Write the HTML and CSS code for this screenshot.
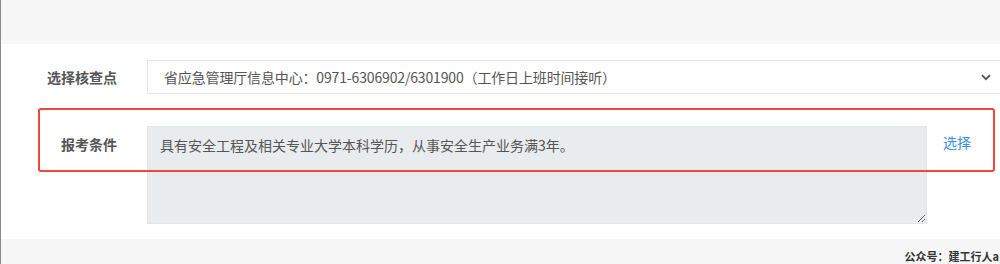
FILE: index.html
```html
<!DOCTYPE html>
<html lang="zh-CN">
<head>
<meta charset="utf-8">
<title>报考条件</title>
<link rel="stylesheet" href="styles.css">
</head>
<body>
<div class="page">
  <div class="top-band"></div>
  <div class="form">
    <div class="row row-select">
      <div class="label">选择核查点</div>
      <div class="select">
        <span class="select-text">省应急管理厅信息中心：0971-6306902/6301900（工作日上班时间接听）</span>
        <svg class="chevron" width="10" height="7" viewBox="0 0 10 7"><path d="M1 1.2 L5 5.2 L9 1.2" fill="none" stroke="#555" stroke-width="1.8"/></svg>
      </div>
    </div>
    <div class="row row-cond">
      <div class="label label-top">报考条件</div>
      <textarea class="area" readonly>具有安全工程及相关专业大学本科学历，从事安全生产业务满3年。</textarea>
      <a class="pick">选择</a>
    </div>
  </div>
  <div class="highlight"></div>
  <div class="footer"><span class="footer-text">公众号：建工行人a</span></div>
</div>
</body>
</html>
```
FILE: styles.css
```css
html, body {
  margin: 0;
  padding: 0;
  background: #fff;
}
body {
  font-family: "Noto Sans CJK SC", "Noto Sans", sans-serif;
  overflow: hidden;
}
.page {
  position: relative;
  width: 999px;
  height: 264px;
  border-left: 1px solid #8a8a8a;
  overflow: hidden;
  display: flex;
  flex-direction: column;
}
.top-band {
  height: 44px;
  background: #f7f7f7;
  flex: none;
}
.form {
  padding-top: 16px;
  flex: none;
}
.row {
  display: grid;
  column-gap: 30px;
}
.row-select {
  grid-template-columns: 116px 858px;
  align-items: center;
  height: 34px;
}
.row-cond {
  margin-top: 32px;
  grid-template-columns: 116px 780px auto;
  column-gap: 30px;
  align-items: start;
}
.label {
  text-align: right;
  font-size: 14px;
  font-weight: 700;
  color: #555;
  line-height: 20px;
}
.label-top {
  margin-top: 8px;
}
.select {
  box-sizing: border-box;
  height: 34px;
  border: 1px solid #e6e6e6;
  background: #fff;
  display: flex;
  align-items: center;
  justify-content: space-between;
  padding: 0 13px 0 16px;
}
.select-text {
  font-size: 14px;
  color: #555;
  white-space: nowrap;
  letter-spacing: -0.15px;
}
.chevron {
  flex: none;
}
.area {
  box-sizing: border-box;
  width: 780px;
  height: 98px;
  margin: 0;
  border: 1px solid #e3e6ea;
  background: #e9ecef;
  padding: 8px 12px;
  font-family: "Noto Sans CJK SC", "Noto Sans", sans-serif;
  font-size: 14px;
  line-height: 20px;
  color: #555;
  outline: none;
}
.pick {
  margin-left: -14px;
  margin-top: 6px;
  font-size: 14px;
  line-height: 20px;
  color: #3b8fe8;
  cursor: pointer;
}
.highlight {
  position: absolute;
  left: 37px;
  top: 108px;
  width: 953px;
  height: 60px;
  border: 2px solid #f0463c;
  border-radius: 3px;
}
.footer {
  margin-top: 15px;
  flex: 1;
  background: #f7f7f7;
  display: flex;
  justify-content: flex-end;
  align-items: flex-end;
}
.footer-text {
  font-size: 11px;
  font-weight: 700;
  color: #333;
  white-space: nowrap;
  line-height: 14px;
  margin-bottom: 1px;
  margin-right: 1px;
}
```
